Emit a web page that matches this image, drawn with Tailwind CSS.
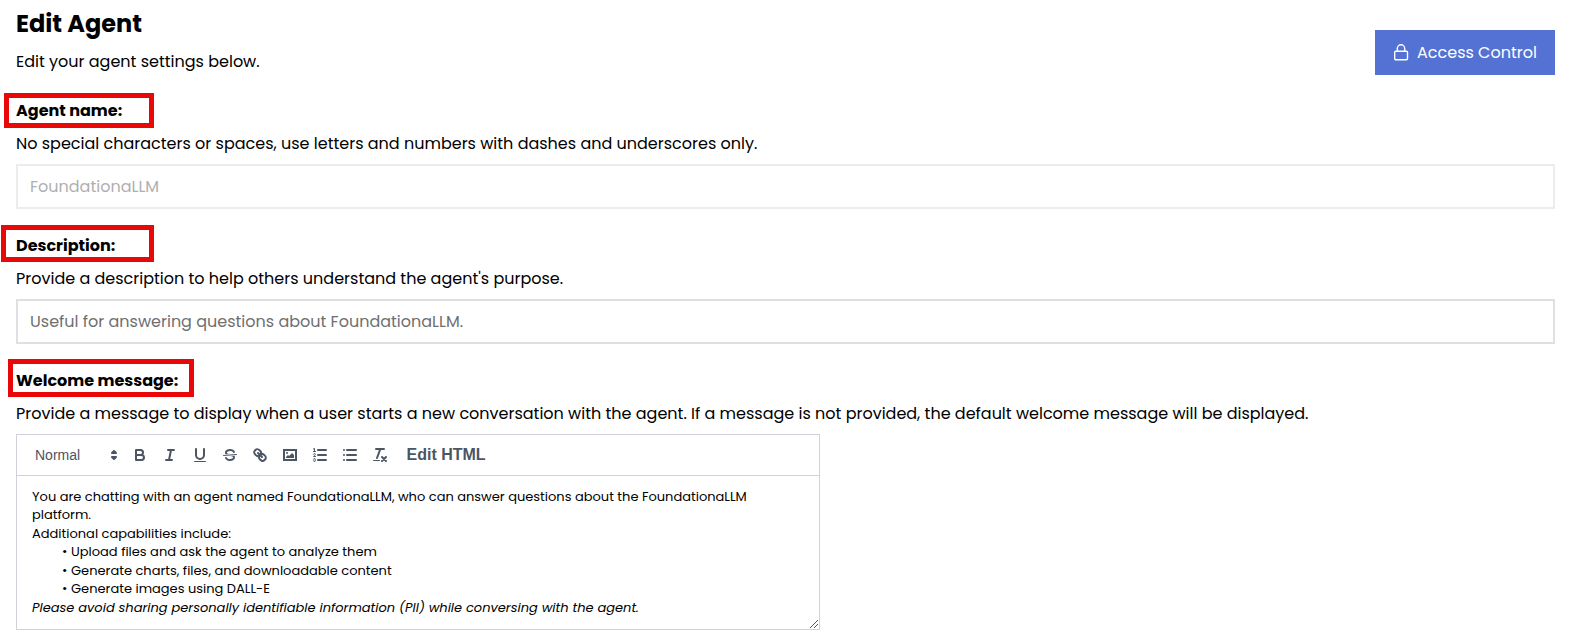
<!DOCTYPE html>
<html lang="en">
<head>
<meta charset="utf-8">
<title>Edit Agent</title>
<script src="https://cdn.jsdelivr.net/npm/@tailwindcss/browser@4"></script>
</head>
<body class="bg-white text-black font-[Poppins,Inter,sans-serif] h-[643px] overflow-hidden">
<main class="pl-4 pr-[21px] pt-2 text-base leading-6">
  <header class="flex justify-between h-[86px]">
    <div>
      <h1 class="text-2xl leading-8 font-bold">Edit Agent</h1>
      <p class="mt-[10px]">Edit your agent settings below.</p>
    </div>
    <button class="mt-[22px] w-[180px] h-[45px] bg-[#5472d4] text-white flex items-center pl-[18px] gap-[8px]">
      <svg class="w-4 h-[17px]" viewBox="0 0 16 17" fill="none" stroke="currentColor" stroke-width="1.4"><rect x="1.700" y="7.200" width="12.800" height="8.600" rx="1"/><path d="M4.300 7V4.500a3.700 3.700 0 0 1 7.400 0V7"/></svg>
      <span class="whitespace-nowrap">Access Control</span>
    </button>
  </header>

  <section class="h-[135px] pt-1">
    <h2 class="font-bold relative mt-[1px]">Agent name:<i class="absolute -left-3 -top-[6px] w-[150px] h-[35px] border-5 border-[#e90808]"></i></h2>
    <p class="mt-[9px]">No special characters or spaces, use letters and numbers with dashes and underscores only.</p>
    <div class="mt-2 h-[45px] border-2 border-[#ececec] text-[#afafaf] px-3 flex items-center">FoundationaLLM</div>
  </section>

  <section class="h-[135px] pt-1">
    <h2 class="font-bold relative mt-[1px]">Description:<i class="absolute -left-[15px] -top-[9px] w-[153px] h-[37px] border-5 border-[#e90808]"></i></h2>
    <p class="mt-[9px]">Provide a description to help others understand the agent's purpose.</p>
    <div class="mt-2 h-[45px] border-2 border-[#e0e0e0] text-[#6f6f6f] px-3 flex items-center">Useful for answering questions about FoundationaLLM.</div>
  </section>

  <section class="pt-1">
    <h2 class="font-bold relative mt-[1px]">Welcome message:<i class="absolute -left-2 -top-[10px] w-[186px] h-[38px] border-5 border-[#e90808]"></i></h2>
    <p class="mt-[9px]">Provide a message to display when a user starts a new conversation with the agent. If a message is not provided, the default welcome message will be displayed.</p>
    <div class="mt-2 w-[804px] h-[196px] border border-[#d0d1db] relative">
      <div class="h-[41px] border-b border-[#d0d1db] flex items-center gap-3 pl-[18px] text-[#4b5563] font-['Liberation_Sans',sans-serif]">
        <div class="flex items-center w-[84px] h-[18px] leading-[18px] justify-between text-sm">Normal
          <svg class="size-[18px] mr-[-4px]" viewBox="0 0 18 18" fill="currentColor" stroke="currentColor" stroke-width="2" stroke-linejoin="round"><path d="M7 11l2 2 2-2zM7 7l2-2 2 2z"/></svg>
        </div>
        <svg class="size-[18px]" viewBox="0 0 18 18" fill="none" stroke="currentColor" stroke-width="2" stroke-linejoin="round"><path d="M5,4H9.5A2.5,2.500,0,0,1,9.5,9H5ZM5,9h5.5A2.5,2.500,0,0,1,10.5,14H5Z"/></svg>
        <svg class="size-[18px]" viewBox="0 0 18 18" fill="none" stroke="currentColor" stroke-width="2" stroke-linecap="round"><path d="M7 4h6M5 14h6M8 14l2-10"/></svg>
        <svg class="size-[18px]" viewBox="0 0 18 18" fill="none" stroke="currentColor" stroke-width="2" stroke-linecap="round"><path d="M5,3V9a4,4,0,0,0,8,0V3"/><rect x="3" y="15" width="12" height="1" rx=".5" fill="currentColor" stroke="none"/></svg>
        <svg class="size-[18px]" viewBox="0 0 18 18" fill="currentColor"><path d="M15.5 8.5L2.5 9.5" stroke="currentColor" stroke-linecap="round"/><path d="M9.007,8C6.542,7.791,6,7.519,6,6.5,6,5.792,7.283,5,9,5c1.571,0,2.765.679,2.969,1.309a1,1,0,0,0,1.9-.617C13.356,4.106,11.354,3,9,3,6.2,3,4,4.538,4,6.5a3.2,3.2,0,0,0,.5,1.843Z"/><path d="M8.984,10C11.457,10.208,12,10.479,12,11.5c0,0.708-1.283,1.5-3,1.5-1.571,0-2.765-.679-2.969-1.309a1,1,0,1,0-1.9.617C4.644,13.894,6.646,15,9,15c2.8,0,5-1.538,5-3.5a3.2,3.2,0,0,0-.5-1.843Z"/></svg>
        <svg class="size-[18px]" viewBox="0 0 18 18" fill="none" stroke="currentColor" stroke-width="2" stroke-linecap="round"><path d="M7 7l4 4M8.9,4.577a3.476,3.476,0,0,1,.36,4.679A3.476,3.476,0,0,1,4.577,8.900C3.185,7.5,2.035,6.4,4.217,4.217S7.5,3.185,8.9,4.577ZM13.423,9.1a3.476,3.476,0,0,0-4.679-.36,3.476,3.476,0,0,0,.36,4.679c1.392,1.392,2.5,2.542,4.679.36S14.815,10.5,13.423,9.1Z"/></svg>
        <svg class="size-[18px]" viewBox="0 0 18 18" fill="currentColor"><rect x="3" y="4" width="12" height="10" fill="none" stroke="currentColor" stroke-width="2"/><circle cx="6" cy="7" r="1"/><path d="M5 12v-1l2-2 1 1 3-3 2 2v3z"/></svg>
        <svg class="size-[18px]" viewBox="0 0 18 18" fill="none" stroke="currentColor" stroke-linecap="round"><path stroke-width="2" d="M7 4h8M7 9h8M7 14h8"/><path d="M2.500 5.500h2M4.5,10.5h-2c0-.234,1.85-1.076,1.85-2.234A0.959,0.959,0,0,0,2.5,8.156M2.5,14.846a0.959,0.959,0,0,0,1.85-.109A0.7,0.7,0,0,0,3.75,14a0.688,0.688,0,0,0,.6-0.736,0.959,0.959,0,0,0-1.85-.109"/><path d="M3.500 5.500v-3l-1 .4"/></svg>
        <svg class="size-[18px]" viewBox="0 0 18 18" fill="none" stroke="currentColor" stroke-width="2" stroke-linecap="round"><path d="M6 4h9M6 9h9M6 14h9M3 4h0M3 9h0M3 14h0"/></svg>
        <svg class="size-[18px]" viewBox="0 0 18 18" fill="none" stroke="currentColor" stroke-width="2" stroke-linecap="round"><path d="M5 3h8M6 12l3.350-9M11 11l4 4M15 11l-4 4"/><rect x="2" y="14" width="7" height="1" rx=".5" fill="currentColor" stroke="none"/></svg>
        <b class="ml-[5.5px] whitespace-nowrap">Edit HTML</b>
      </div>
      <div class="pt-3 pl-[15px] text-[13px] leading-[18.46px]">
        <p>You are chatting with an agent named FoundationaLLM, who can answer questions about the FoundationaLLM</p>
        <p>platform.</p>
        <p>Additional capabilities include:</p>
        <ul class="pl-[30px]">
          <li class="flex"><span class="w-[9px]">•</span>Upload files and ask the agent to analyze them</li>
          <li class="flex"><span class="w-[9px]">•</span>Generate charts, files, and downloadable content</li>
          <li class="flex"><span class="w-[9px]">•</span>Generate images using DALL-E</li>
        </ul>
        <p class="italic">Please avoid sharing personally identifiable information (PII) while conversing with the agent.</p>
      </div>
      <svg class="absolute right-[1px] bottom-[1px] size-2" viewBox="0 0 8 8" stroke="#555"><path d="M0 8L8 0M4 8L8 4"/></svg>
    </div>
  </section>
</main>
</body>
</html>
